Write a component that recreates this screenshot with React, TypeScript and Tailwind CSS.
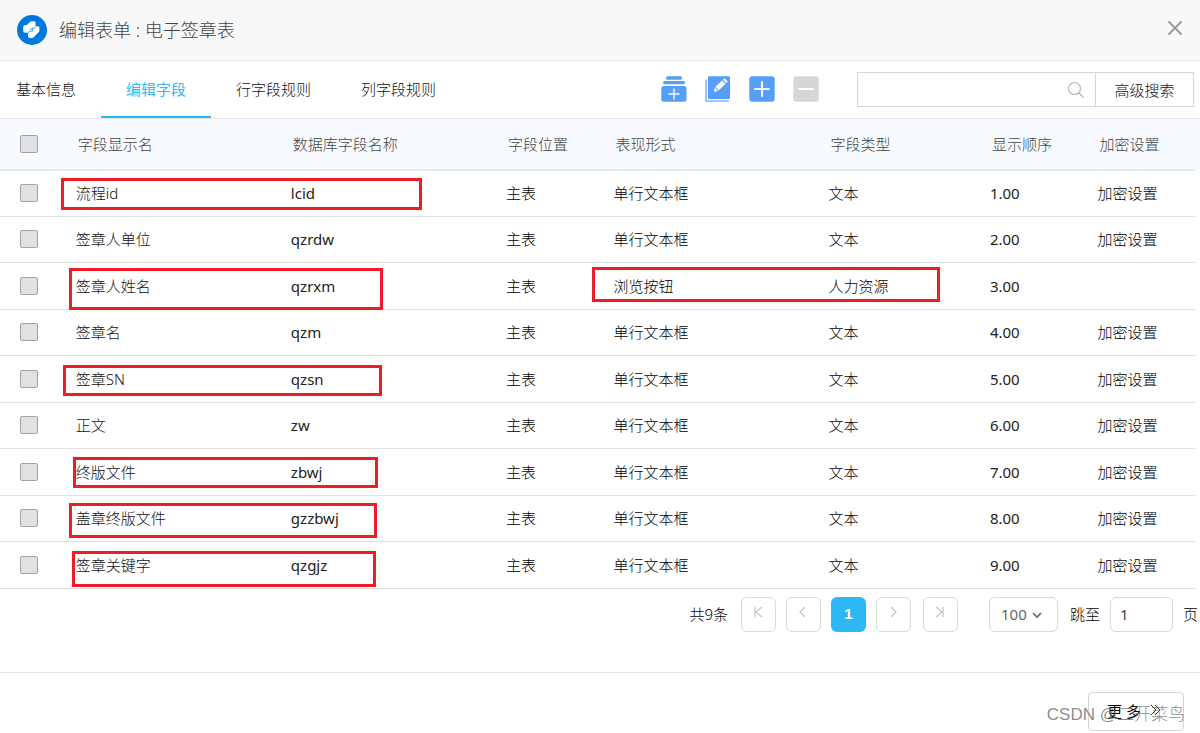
import { useState } from "react";

type Field = {
  name: string;
  column: string;
  widget: string;
  type: string;
  order: string;
  encrypt: boolean;
};

type Mark = { left: number; top: number; width: number; height: number };

const TABS = ["基本信息", "编辑字段", "行字段规则", "列字段规则"];

const FIELDS: Field[] = [
  { name: "流程id", column: "lcid", widget: "单行文本框", type: "文本", order: "1.00", encrypt: true },
  { name: "签章人单位", column: "qzrdw", widget: "单行文本框", type: "文本", order: "2.00", encrypt: true },
  { name: "签章人姓名", column: "qzrxm", widget: "浏览按钮", type: "人力资源", order: "3.00", encrypt: false },
  { name: "签章名", column: "qzm", widget: "单行文本框", type: "文本", order: "4.00", encrypt: true },
  { name: "签章SN", column: "qzsn", widget: "单行文本框", type: "文本", order: "5.00", encrypt: true },
  { name: "正文", column: "zw", widget: "单行文本框", type: "文本", order: "6.00", encrypt: true },
  { name: "终版文件", column: "zbwj", widget: "单行文本框", type: "文本", order: "7.00", encrypt: true },
  { name: "盖章终版文件", column: "gzzbwj", widget: "单行文本框", type: "文本", order: "8.00", encrypt: true },
  { name: "签章关键字", column: "qzgjz", widget: "单行文本框", type: "文本", order: "9.00", encrypt: true },
];

// Red review marks, relative to the table's top left corner
const MARKS: Mark[] = [
  { left: 61, top: 59, width: 361, height: 32 },
  { left: 69, top: 149, width: 314, height: 42 },
  { left: 592, top: 148, width: 348, height: 35 },
  { left: 63, top: 246, width: 319, height: 31 },
  { left: 73, top: 338, width: 305, height: 31 },
  { left: 69, top: 384, width: 308, height: 35 },
  { left: 72, top: 432, width: 304, height: 36 },
];

const PAGE_ICONS = {
  first: "M3 1v10M10 1L4 6l6 5",
  prev: "M8 1L3 6l5 5",
  next: "M4 1l5 5-5 5",
  last: "M9 1v10M2 1l6 5-6 5",
};

function Logo() {
  return (
    <svg width="30" height="30" viewBox="0 0 30 30" className="shrink-0">
      <circle cx="15" cy="15" r="15" fill="#0079de" />
      <path
        d="M10 10L12.6 7.2Q13.4 6.2 15 6.2H17.2Q18.6 6.2 18.6 7.8V11.2H20.8Q22.4 11.2 22.4 12.8V15.4Q22.4 16.4 21.6 17.2L19.4 19.6L17 22Q16 23 14.6 23H12.6Q11 23 11 21.2V17.8H8Q6.2 17.8 6.2 16V12.4Q6.2 10 8.4 10Z"
        fill="#fff"
      />
      <path d="M11 18L12.4 16.2H15.4V13.4H17.4L18.6 11.4M12.8 14.4l2.6-1" fill="none" stroke="#0079de" strokeWidth="0.7" />
    </svg>
  );
}

function PageButton({ icon, label }: { icon: keyof typeof PAGE_ICONS; label: string }) {
  return (
    <button
      type="button"
      aria-label={label}
      className="flex size-[35px] items-center justify-center rounded-md border border-[#d9d9d9] pb-1 text-[#c4c4c4]"
    >
      <svg width="12" height="12" viewBox="0 0 12 12" fill="none" stroke="currentColor" strokeWidth="1.2">
        <path d={PAGE_ICONS[icon]} />
      </svg>
    </button>
  );
}

function Check({ label }: { label: string }) {
  return (
    <input
      type="checkbox"
      aria-label={label}
      className="block size-[18px] appearance-none rounded-xs border border-[#a3a3a3] bg-[#e1e1e1] checked:bg-[#2db7f5]"
    />
  );
}

function Toolbar() {
  return (
    <div className="mb-0.5 flex gap-[18px]">
      <button type="button" aria-label="批量新增" className="size-[26px]">
        <svg width="26" height="26" viewBox="0 0 26 26" fill="#559ff8">
          <rect x="5" y="0.3" width="16" height="3.4" rx="1.5" />
          <rect x="2" y="5" width="22" height="3.2" rx="1.5" />
          <rect x="0.3" y="10" width="25.2" height="15.7" rx="2.5" />
          <path d="M13 12.5v11M7.5 18h11" stroke="#fff" strokeWidth="1.4" />
        </svg>
      </button>
      <button type="button" aria-label="编辑" className="size-[26px]">
        <svg width="26" height="26" viewBox="0 0 26 26" fill="none">
          <path d="M1 3.5V25H24" stroke="#7db6fa" strokeWidth="1.6" />
          <rect x="3" y="0.3" width="22" height="22.7" rx="1" fill="#559ff8" />
          <path d="M9 15.7l.8-4.2 3.4 3.4z" fill="#fff" />
          <path d="M10.4 10.7l6.7-6.3 3.4 3.4-6.6 6.4z" fill="#fff" />
          <path d="M18 3.7l1-.9q.7-.5 1.4.1l1.9 2q.5.7 0 1.3l-.9.9z" fill="#fff" />
        </svg>
      </button>
      <button type="button" aria-label="新增" className="size-[26px]">
        <svg width="26" height="26" viewBox="0 0 26 26">
          <rect x="0.3" y="0.3" width="25.4" height="25.4" rx="3" fill="#559ff8" />
          <path d="M13 5.3v15.4M5.3 13h15.4" stroke="#fff" strokeWidth="2" />
        </svg>
      </button>
      <button type="button" aria-label="删除" className="size-[26px]">
        <svg width="26" height="26" viewBox="0 0 26 26">
          <rect x="0.3" y="0.3" width="25.4" height="25.4" rx="3" fill="#d6d6d6" />
          <path d="M5.3 13h15.4" stroke="#fff" strokeWidth="2" />
        </svg>
      </button>
    </div>
  );
}

function FieldTable() {
  return (
    <div className="relative pr-[5px]">
      <table className="w-full table-fixed border-collapse text-left text-[15px] leading-5">
        <colgroup>
          <col />
          <col className="w-[18%]" />
          <col className="w-[18%]" />
          <col className="w-[9%]" />
          <col className="w-[18%]" />
          <col className="w-[13.5%]" />
          <col className="w-[9%]" />
          <col className="w-[9%]" />
        </colgroup>
        <thead>
          <tr className="h-[51px] border-b-2 border-[#e2ecf3] bg-[#f7fbff] text-[#444] *:pl-3 *:font-light">
            <th>
              <div className="pl-2">
                <Check label="全选" />
              </div>
            </th>
            <th>字段显示名</th>
            <th>数据库字段名称</th>
            <th>字段位置</th>
            <th>表现形式</th>
            <th>字段类型</th>
            <th>显示顺序</th>
            <th className="shadow-[5px_0_0_#f7fbff]">加密设置</th>
          </tr>
        </thead>
        <tbody>
          {FIELDS.map((f) => (
            <tr
              key={f.column}
              className="h-[46px] border-b border-[#e0e0e0] text-black not-first:odd:h-[47px] *:pl-[10px]"
            >
              <td>
                <div className="pl-[10px]">
                  <Check label={f.name} />
                </div>
              </td>
              <td className="text-[#111]">{f.name}</td>
              <td className="font-normal text-[#222]">{f.column}</td>
              <td>主表</td>
              <td>{f.widget}</td>
              <td>{f.type}</td>
              <td className="font-normal text-[#222]">{f.order}</td>
              <td>{f.encrypt && <a href="#encrypt">加密设置</a>}</td>
            </tr>
          ))}
        </tbody>
      </table>

      {MARKS.map((m) => (
        <div
          key={`${m.left}-${m.top}`}
          className="pointer-events-none absolute border-3 border-[#ee1c25]"
          style={m}
        />
      ))}
    </div>
  );
}

export default function App() {
  const [tab, setTab] = useState(1);

  return (
    <div className="min-h-screen overflow-x-hidden bg-white font-['Noto_Sans','Noto_Sans_CJK_SC',sans-serif] text-[15px] leading-5 font-light text-black">
      {/* Title */}
      <header className="flex h-[61px] items-center justify-between border-b border-[#e5e5e5] bg-[#f8f8f8] px-[17px]">
        <div className="flex items-center gap-3">
          <Logo />
          <h1 className="text-lg font-light text-[#444]">编辑表单 : 电子签章表</h1>
        </div>
        <button type="button" aria-label="关闭" className="pb-1 text-[#999]">
          <svg width="16" height="16" viewBox="0 0 16 16" fill="none" stroke="currentColor" strokeWidth="1.8">
            <path d="M1.5 1.5l13 13M14.5 1.5l-13 13" />
          </svg>
        </button>
      </header>

      {/* Tabs and tools */}
      <div className="flex h-[58px] items-center justify-between border-b border-[#e5e5e5] pr-1.5">
        <nav className="flex h-full">
          {TABS.map((t, i) => (
            <button
              key={t}
              type="button"
              onClick={() => setTab(i)}
              className={
                i === tab
                  ? "border-b-2 border-[#2db7f5] px-[25px] font-normal text-[#2db7f5]"
                  : "border-b-2 border-transparent px-[25px] text-[#111] first:pl-4"
              }
            >
              {t}
            </button>
          ))}
        </nav>
        <div className="flex items-center gap-[38px]">
          <Toolbar />
          <div className="flex h-[35px] border border-[#d6d6d6]">
            <div className="flex items-center pr-[10px]">
              <input type="text" aria-label="搜索" className="w-[209px] px-2 outline-none" />
              <svg width="18" height="18" viewBox="0 0 18 18" fill="none" stroke="#b5b5b5" strokeWidth="1.2">
                <circle cx="7.5" cy="7.5" r="6" />
                <path d="M12 12l4.5 4.5" />
              </svg>
            </div>
            <button type="button" className="w-[98px] border-l border-[#d6d6d6] text-[#111]">
              高级搜索
            </button>
          </div>
        </div>
      </div>

      <FieldTable />

      {/* Paging */}
      <div className="flex items-center justify-end gap-[10px] pt-2 pr-0.5 pb-10">
        <span className="pr-[3px]">共9条</span>
        <PageButton icon="first" label="首页" />
        <PageButton icon="prev" label="上一页" />
        <button
          type="button"
          className="size-[35px] rounded-md bg-[#2db7f5] font-['Liberation_Sans',sans-serif] font-bold text-white"
        >
          1
        </button>
        <PageButton icon="next" label="下一页" />
        <div className="pr-[21px] pl-0.5">
          <PageButton icon="last" label="末页" />
        </div>
        <div className="relative">
          <select
            aria-label="每页条数"
            className="h-[35px] w-[69px] appearance-none rounded-md border border-[#d9d9d9] bg-white pl-[11px] font-normal text-[#666]"
          >
            <option>100</option>
          </select>
          <svg
            className="pointer-events-none absolute top-[14px] right-4"
            width="10"
            height="8"
            viewBox="0 0 10 8"
            fill="none"
            stroke="#666"
            strokeWidth="1.6"
          >
            <path d="M1 2l4 4 4-4" />
          </svg>
        </div>
        <label htmlFor="jump" className="pl-0.5">跳至</label>
        <input
          id="jump"
          type="text"
          defaultValue="1"
          className="h-[35px] w-[63px] rounded-md border border-[#d9d9d9] px-[9px] font-normal text-[#444]"
        />
        <span>页</span>
      </div>

      {/* Footer */}
      <footer className="relative flex justify-end border-t border-[#e5e5e5] px-4 pt-[19px] pb-0.5">
        <button
          type="button"
          className="flex h-[39px] w-24 items-center gap-2 rounded-sm border border-[#d6d6d6] pl-[18px] font-normal"
        >
          更 多
          <svg width="14" height="14" viewBox="0 0 14 14" fill="none" stroke="#333">
            <path d="M2 1l5 5-5 5M6 1l5 5-5 5" />
          </svg>
        </button>
        <span className="pointer-events-none absolute right-[15px] bottom-[6px] font-['Liberation_Sans','Noto_Sans_CJK_SC',sans-serif] text-[17px] leading-6 text-[#777]/85">
          CSDN @二开菜鸟
        </span>
      </footer>
    </div>
  );
}
